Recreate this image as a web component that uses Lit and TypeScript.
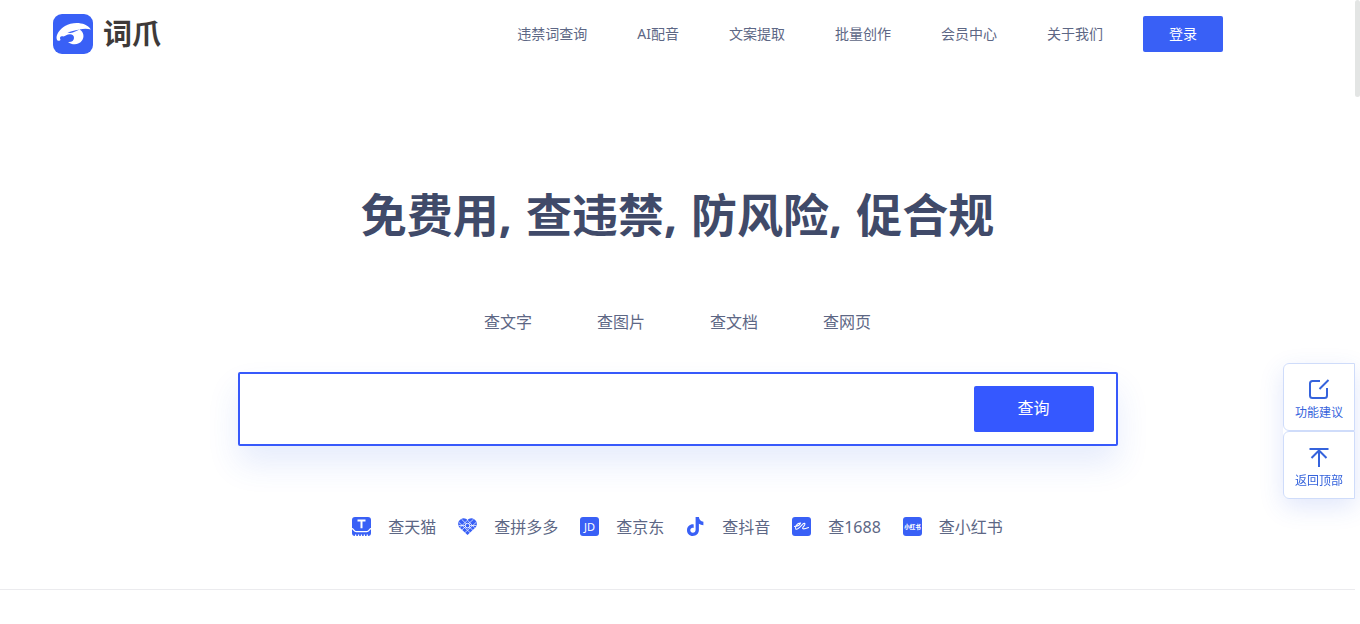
import { LitElement, html, css, svg } from "lit";
import { customElement } from "lit/decorators.js";

const NAV = ["违禁词查询", "AI配音", "文案提取", "批量创作", "会员中心", "关于我们"];
const SLOGAN = ["免费用,", "查违禁,", "防风险,", "促合规"];
const TABS = ["查文字", "查图片", "查文档", "查网页"];

const tile = svg`<rect width="19" height="19" rx="3" fill="#3960f6"/>`;

const PLATFORMS = [
  {
    name: "查天猫",
    icon: svg`${tile}
      <path d="M5.5 3.4h8M9.5 3.4v7.8" stroke="#fff" stroke-width="2" fill="none"/>
      <path d="M0 11.600c1.400 0 2 3 4.200 3h10.600c2.200 0 2.800-3 4.200-3" stroke="#fff" stroke-width="1.300" fill="none"/>
      <path d="M3 18.300h13" stroke="#fff" stroke-width="1.400" stroke-dasharray="1.300 1.600" fill="none"/>`,
  },
  {
    name: "查拼多多",
    icon: svg`<path d="M9.500 18 1.300 10.300C-.6 8.200-.2 3.800 2.800 2.200 5.500.6 8 1.500 9.500 3.200 11 1.500 13.500.6 16.200 2.200c3 1.600 3.400 6 1.500 8.100z" fill="#3960f6"/>
      <path d="M1 5.500 12.500 16M3.500 2.200 15 13.500M9.500 3.200l7 7.500M15.500 2.200 3.800 13M18 5.500 6.500 16M9.500 3.200 2 10.500M.5 8.500h18" stroke="#fff" stroke-width=".7" fill="none"/>
      <circle cx="9.500" cy="8.600" r="2.300" fill="#3960f6" stroke="#fff" stroke-width=".9"/>`,
  },
  {
    name: "查京东",
    icon: svg`${tile}<text x="9.500" y="13.500" text-anchor="middle" font-family="Noto Sans, sans-serif" font-size="11" fill="#fff">JD</text>`,
  },
  {
    name: "查抖音",
    icon: svg`<path d="M9.600 0h3.300c.2 2.700 1.900 4.500 4.500 4.700v3.500c-1.700 0-3.200-.5-4.500-1.400v6c0 3.900-2.700 6.200-6.100 6.200C3.300 19 1 16.300 1 13.200 1 9.500 4 7 7.700 7.400v3.500c-1.900-.5-3.400.6-3.400 2.300 0 1.500 1.100 2.500 2.500 2.500 1.700 0 2.800-1.100 2.800-3z" fill="#3960f6"/>`,
  },
  {
    name: "查1688",
    icon: svg`${tile}<path d="M2.500 9.500C5 9.300 8 7.800 8.500 6 5 6 2.500 10 3.800 12c1.700 1.500 5-3 7.200-5.200 2.500-1.300 2.500.7.500 2.700-2 2.500-.5 3.300 5 1" stroke="#fff" stroke-width="1.100" fill="none" stroke-linecap="round"/>`,
  },
  {
    name: "查小红书",
    icon: svg`${tile}<text x="9.500" y="11.700" text-anchor="middle" font-family="Noto Sans CJK SC, sans-serif" font-weight="900" font-size="5.500" fill="#fff">小红书</text>`,
  },
];

@customElement("app-root")
export class AppRoot extends LitElement {
  static styles = css`
    :host {
      display: grid;
      grid-template-columns: minmax(0, 1fr) 5px;
      height: 100vh;
      overflow: hidden;
      background: #fff;
      color: #5d6785;
      font-family: "Noto Sans", "Noto Sans CJK SC", sans-serif;
      font-size: 16px;
      line-height: 24px;
    }
    * {
      box-sizing: border-box;
    }
    a {
      color: inherit;
      text-decoration: none;
    }
    button,
    input {
      border: 0;
      padding: 0;
      font: inherit;
    }
    button {
      cursor: pointer;
    }
    .rail {
      height: 100%;
    }
    .thumb {
      height: 15.6%;
      border-radius: 3px;
      background: #e3e5e4;
    }
    header {
      display: flex;
      align-items: center;
      justify-content: space-between;
      height: 68px;
      padding: 0 132px 0 53px;
    }
    .brand {
      display: flex;
      align-items: center;
      gap: 10px;
      color: #3e3a39;
      font-family: "Noto Sans CJK SC", sans-serif;
      font-size: 29px;
      font-weight: 700;
      line-height: 36px;
    }
    .brand svg {
      width: 40px;
      height: 40px;
    }
    .brand span {
      padding-bottom: 4px;
    }
    nav {
      display: flex;
      align-items: center;
      gap: 50px;
      font-size: 14px;
    }
    .right {
      display: flex;
      align-items: center;
      gap: 40px;
    }
    .login {
      width: 80px;
      height: 36px;
      border-radius: 2px;
      background: #3960f6;
      color: #fff;
      font-size: 14px;
    }
    main {
      display: flex;
      flex-direction: column;
      align-items: center;
      padding: 111px 24px 50px;
      border-bottom: 1px solid #ebebee;
    }
    h1 {
      display: flex;
      gap: 14px;
      margin: 0;
      color: #404a69;
      font-size: 46px;
      font-weight: 700;
      line-height: 70px;
    }
    .tabs {
      display: flex;
      gap: 65px;
      margin-top: 61px;
    }
    .search {
      display: flex;
      align-items: center;
      width: 100%;
      max-width: 880px;
      height: 74px;
      margin-top: 38px;
      padding-right: 22px;
      border: 2px solid #3759fb;
      border-radius: 2px;
      background: #fff;
      box-shadow: 0 18px 32px rgba(53, 96, 230, 0.12);
    }
    .search input {
      flex: 1;
      min-width: 0;
      height: 46px;
      padding: 0 22px;
      outline: 0;
      background: transparent;
    }
    .search button {
      width: 120px;
      height: 46px;
      padding-bottom: 2px;
      border-radius: 2px;
      background: #3558ff;
      color: #fff;
    }
    .platforms {
      display: flex;
      gap: 22px;
      margin-top: 69px;
    }
    .platform {
      display: flex;
      align-items: center;
      gap: 16px;
    }
    .platform svg {
      width: 20px;
      height: 20px;
    }
    aside {
      position: fixed;
      right: 5px;
      bottom: 125px;
      width: 72px;
      border-radius: 6px 0 0 6px;
      box-shadow: 0 8px 24px rgba(53, 96, 230, 0.15);
    }
    .side {
      display: flex;
      flex-direction: column;
      align-items: center;
      gap: 2px;
      width: 100%;
      height: 68px;
      padding-top: 13px;
      border: 1px solid #cfdcfa;
      border-radius: 6px 0 0 6px;
      background: #fff;
      color: #3563dc;
      font-size: 12px;
      line-height: 20px;
    }
    .side svg {
      width: 24px;
      height: 24px;
      flex: none;
    }
  `;

  render() {
    return html`
      <div class="page">
        <header>
          <a class="brand" href="#">
            <svg viewBox="0 0 40 40" aria-hidden="true">
              <rect width="40" height="40" rx="9" fill="#3960f6" />
              <path
                d="M4 26C2 21 7 15 12 12 20 7.500 33 8 37.800 15.500 34 14.200 30 14.600 26.500 15.500 31 18 31.500 23 29 26.500 26 31 19.500 31.500 15 28 18.500 28.500 21 26.500 21 24 21 21.500 19.500 20.300 17 20.300 13.500 20.300 12 23 9.500 22.300 7.500 22 6.300 23 7.500 26 6 27.200 4.500 27 4 26z"
                fill="#fff"
              />
              <path d="M14.500 18.400c3.500-.4 6.500-2.300 12-2.900-3.500 1.300-7 4.600-12 2.900z" fill="#3960f6" />
            </svg>
            <span>词爪</span>
          </a>
          <div class="right">
            <nav>${NAV.map((label) => html`<a href="#">${label}</a>`)}</nav>
            <button class="login">登录</button>
          </div>
        </header>
        <main>
          <h1>${SLOGAN.map((phrase) => html`<span>${phrase}</span>`)}</h1>
          <div class="tabs">${TABS.map((label) => html`<a href="#">${label}</a>`)}</div>
          <form class="search" @submit=${(e: Event) => e.preventDefault()}>
            <input type="text" aria-label="查询内容" />
            <button type="submit">查询</button>
          </form>
          <div class="platforms">
            ${PLATFORMS.map(
              (p) => html`<a class="platform" href="#">
                <svg viewBox="0 0 20 20" aria-hidden="true">${p.icon}</svg>${p.name}
              </a>`
            )}
          </div>
        </main>
      </div>
      <div class="rail"><div class="thumb"></div></div>
      <aside>
        <button class="side">
          <svg viewBox="0 0 24 24" fill="none" stroke="currentColor" stroke-width="2" aria-hidden="true">
            <path d="M13 4H5.500Q3 4 3 6.500v12Q3 21 5.500 21h12q2.500 0 2.500-2.500V11" />
            <path d="M12.500 12 21.500 3" />
          </svg>
          功能建议
        </button>
        <button class="side">
          <svg viewBox="0 0 24 24" fill="none" stroke="currentColor" stroke-width="2" aria-hidden="true">
            <path d="M2.500 4h19M12 5v17M4.500 13 12 5.500l7.500 7.500" />
          </svg>
          返回顶部
        </button>
      </aside>
    `;
  }
}
